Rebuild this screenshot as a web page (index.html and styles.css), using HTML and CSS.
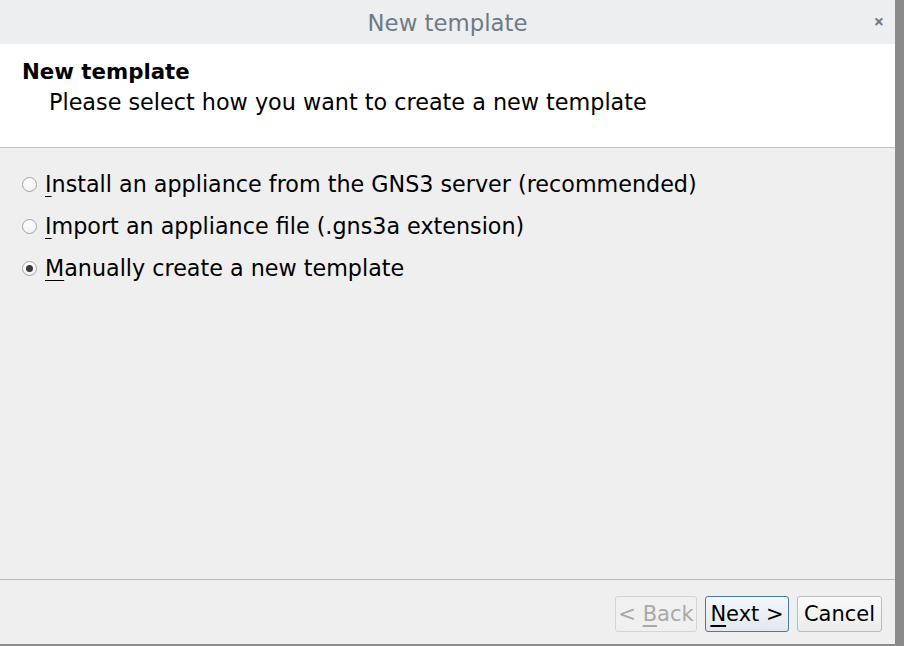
FILE: index.html
```html
<!DOCTYPE html>
<html>
<head>
<meta charset="utf-8">
<link rel="stylesheet" href="styles.css">
</head>
<body>
<div class="window">
  <div class="titlebar">
    <span class="title">New template</span>
    <span class="close">×</span>
  </div>
  <div class="header">
    <div class="h-title">New template</div>
    <div class="h-sub">Please select how you want to create a new template</div>
  </div>
  <div class="content">
    <label class="opt"><span class="radio"></span><span><u>I</u>nstall an appliance from the GNS3 server (recommended)</span></label>
    <label class="opt"><span class="radio"></span><span><u>I</u>mport an appliance file (.gns3a extension)</span></label>
    <label class="opt"><span class="radio checked"></span><span><u>M</u>anually create a new template</span></label>
  </div>
  <div class="footer">
    <button class="btn disabled">&lt; <u>B</u>ack</button>
    <button class="btn default"><u>N</u>ext &gt;</button>
    <button class="btn">Cancel</button>
  </div>
</div>
</body>
</html>
```
FILE: styles.css
```css
html, body {
  margin: 0;
  padding: 0;
  width: 904px;
  height: 646px;
  background: #8a8a8a;
  overflow: hidden;
  font-family: "DejaVu Sans", sans-serif;
}
.window {
  width: 895px;
  height: 644px;
  display: flex;
  flex-direction: column;
  background: #efefef;
}
.titlebar {
  height: 44px;
  flex: none;
  background: #edeef0;
  display: flex;
  align-items: center;
  justify-content: center;
  position: relative;
}
.title {
  font-size: 22.8px;
  line-height: 30px;
  padding-top: 2px;
  color: #6e7a86;
}
.close {
  position: absolute;
  right: 11px;
  top: 9px;
  font-size: 18px;
  font-weight: bold;
  color: #6e7a86;
  font-family: "Open Sans", sans-serif;
}
.header {
  height: 103px;
  flex: none;
  background: #fff;
  border-bottom: 1px solid #c2c2c2;
  box-sizing: content-box;
  padding: 0;
}
.h-title {
  font-weight: bold;
  font-size: 21.3px;
  color: #000;
  margin: 14px 0 0 22px;
  line-height: 28px;
}
.h-sub {
  font-size: 22.3px;
  color: #000;
  margin: 2px 0 0 49px;
  line-height: 28px;
}
.content {
  flex: 1;
  border-bottom: 1px solid #bababa;
  padding-top: 22px;
  display: flex;
  flex-direction: column;
  gap: 14px;
}
.opt {
  display: flex;
  align-items: center;
  font-size: 22.25px;
  line-height: 28px;
  height: 28px;
  color: #000;
  padding-left: 22px;
}
.opt u {
  text-decoration-thickness: 1px;
  text-underline-offset: 4px;
}
.radio {
  width: 13px;
  height: 13px;
  border: 1px solid #a3a3a3;
  border-radius: 50%;
  background: linear-gradient(#ffffff, #f2f2f2);
  margin-right: 8px;
  position: relative;
  flex: none;
}
.radio.checked::after {
  content: "";
  position: absolute;
  left: 3px;
  top: 3px;
  width: 7px;
  height: 7px;
  border-radius: 50%;
  background: #3a3a3a;
}
.footer {
  height: 64px;
  flex: none;
  display: flex;
  align-items: flex-start;
  justify-content: flex-end;
  padding: 16px 13px 0 0;
  box-sizing: border-box;
  gap: 8px;
}
.btn {
  height: 36px;
  box-sizing: border-box;
  border: 1px solid #bcbcbc;
  border-radius: 3px;
  background: linear-gradient(#fafafa, #ececec);
  font-family: inherit;
  font-size: 21px;
  color: #000;
  padding: 0;
  margin: 0;
  white-space: nowrap;
}
.btn.disabled {
  width: 82px;
  color: #a9a9a9;
  border-color: #d3d3d3;
  background: #f0f0f0;
}
.btn.default {
  width: 84px;
  border-color: #4a7aa4;
  background: linear-gradient(#f4f7fa, #e2e8ee);
}
.btn:last-child {
  width: 85px;
}
.btn u {
  text-decoration-thickness: 2px;
  text-underline-offset: 4px;
}
```
